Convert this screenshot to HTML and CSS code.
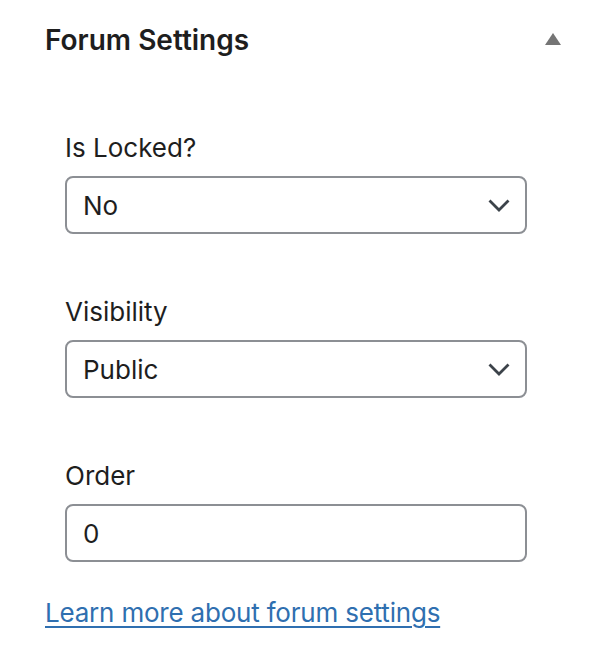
FILE: index.html
```html
<!DOCTYPE html>
<html>
<head>
<meta charset="utf-8">
<link rel="stylesheet" href="styles.css">
</head>
<body>
<div class="panel">
  <div class="panel-header">
    <h2 class="panel-title">Forum Settings</h2>
    <svg class="toggle" width="16" height="12" viewBox="0 0 16 12"><polygon points="8,0 16,12 0,12" fill="#757575"/></svg>
  </div>
  <div class="fields">
    <div class="field">
      <div class="label">Is Locked?</div>
      <div class="control">
        <span class="value">No</span>
        <svg class="chev" width="22" height="13" viewBox="0 0 22 13"><polyline points="1.5,1.5 11,11 20.5,1.5" fill="none" stroke="#3c434a" stroke-width="2.8"/></svg>
      </div>
    </div>
    <div class="field">
      <div class="label">Visibility</div>
      <div class="control">
        <span class="value">Public</span>
        <svg class="chev" width="22" height="13" viewBox="0 0 22 13"><polyline points="1.5,1.5 11,11 20.5,1.5" fill="none" stroke="#3c434a" stroke-width="2.8"/></svg>
      </div>
    </div>
    <div class="field">
      <div class="label">Order</div>
      <div class="control">
        <span class="value">0</span>
      </div>
    </div>
  </div>
  <a class="learn" href="#">Learn more about forum settings</a>
</div>
</body>
</html>
```
FILE: styles.css
```css
* { box-sizing: border-box; }
body {
  margin: 0;
  background: #ffffff;
  font-family: Inter, "Noto Sans", sans-serif;
  color: #1e1e1e;
}
.panel {
  padding: 22px 29px 0 45px;
}
.panel-header {
  display: flex;
  align-items: center;
  justify-content: space-between;
}
.panel-title {
  margin: 0;
  font-size: 28px;
  line-height: 36px;
  font-weight: 600;
}
.toggle {
  display: block;
  margin-top: -3px;
}
.fields {
  padding: 72px 34px 0 20px;
  display: flex;
  flex-direction: column;
  gap: 60px;
}
.field {
  display: flex;
  flex-direction: column;
  gap: 10px;
}
.label {
  font-size: 26px;
  line-height: 36px;
}
.control {
  height: 58px;
  border: 2px solid #8c8f94;
  border-radius: 8px;
  display: flex;
  align-items: center;
  justify-content: space-between;
  padding: 0 15px 0 16px;
  font-size: 26px;
}
.chev { display: block; }
.learn {
  display: inline-block;
  margin-top: 33px;
  font-size: 26px;
  line-height: 36px;
  letter-spacing: -0.2px;
  color: #2f6fb0;
  text-decoration: underline;
  text-underline-offset: 4px;
  text-decoration-thickness: 2px;
}
```
